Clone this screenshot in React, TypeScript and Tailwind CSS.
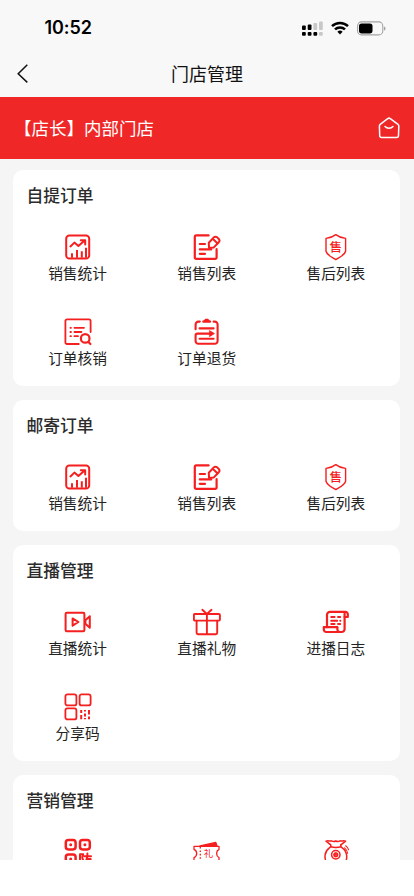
import type { ReactNode } from 'react'

const RED = '#f51f1f'

function Icon({ children, width = 1.8 }: { children: ReactNode; width?: number }) {
  return (
    <svg
      viewBox="0 0 28 28"
      className="size-7 shrink-0"
      fill="none"
      stroke={RED}
      strokeWidth={width}
      strokeLinecap="round"
      strokeLinejoin="round"
    >
      {children}
    </svg>
  )
}

const StatsIcon = () => (
  <Icon width={2}>
    <rect x="2.2" y="2.6" width="23" height="23" rx="3.2" />
    <path d="M6.4 13.4l4-3.8 4 3.4 6.2-5.4M16.8 7.2h4.4v4.4" />
    <path d="M8 20.2v4.6M13 17v7.8M17.8 18.2v6.6M22 14.8v10" strokeLinecap="butt" />
  </Icon>
)

const ListIcon = () => (
  <Icon width={2.2}>
    <path d="M15.6 2.4H3.2a1.4 1.4 0 0 0-1.4 1.4v20.6a1.4 1.4 0 0 0 1.4 1.4h19a1.4 1.4 0 0 0 1.4-1.4v-8.2" />
    <path d="M6.8 11h5.2M6.8 16.4h11.4M6.8 20.8h5.2" />
    <path d="M15.8 9.8l5-5.4a2.4 2.4 0 0 1 3.4 0l1.6 1.6a2.4 2.4 0 0 1 0 3.2l-5 5.2-4.8.6zM20 6l4.4 4.2" strokeWidth="2" />
  </Icon>
)

const ShieldIcon = () => (
  <Icon width={1.4}>
    <path d="M13.8 1.6c3 2.4 6.4 3.4 9.8 3.8v12.8c-1.2 4.4-5.8 5.8-9.8 8.4-4-2.6-8.6-4-9.8-8.4V5.4c3.400-.4 6.800-1.400 9.800-3.800z" />
    <text
      x="13.8"
      y="18.8"
      textAnchor="middle"
      fontSize="12.5"
      fontWeight="500"
      fontFamily="'Noto Sans CJK SC', sans-serif"
      fill={RED}
      stroke="none"
    >
      售
    </text>
  </Icon>
)

const VerifyIcon = () => (
  <Icon width={1.8}>
    <path d="M14.8 26H3a1.6 1.6 0 0 1-1.6-1.6V3A1.6 1.6 0 0 1 3 1.4h22A1.6 1.6 0 0 1 26.600 3v11" />
    <path d="M10.4 9.800h9.600M10.400 14h7M10.400 18.200h3.600M6.400 9.800h.6M6.400 14h.6M6.400 18.200h.6" />
    <circle cx="21.2" cy="20.4" r="4.3" strokeWidth="2.2" />
    <path d="M24.4 24l2 2" strokeWidth="2.2" />
  </Icon>
)

const ReturnIcon = () => (
  <Icon width={2.1}>
    <path d="M6.8 3.600H5.400a2.800 2.800 0 0 0-2.800 2.800v4.800M20.600 3.600h1.200a2.800 2.800 0 0 1 2.800 2.800v16.600a2.800 2.800 0 0 1-2.800 2.800H5.400a2.800 2.800 0 0 1-2.800-2.800v-5.600a1.800 1.800 0 0 1 1.800-1.800h14.600" />
    <path d="M10.200 3.600h7M6.600 10.400h14M6.600 20.800h14" />
    <path d="M10.600 4v-1.400l1.800-1.800h2.600l1.800 1.800V4z" fill={RED} stroke="none" />
    <path d="M16.800 12.800l4.600 2.800-4.600 2.800z" fill={RED} strokeWidth="0.8" />
  </Icon>
)

const VideoIcon = () => (
  <Icon width={2}>
    <rect x="1.6" y="4.8" width="18.8" height="18.4" rx="1.2" />
    <path d="M8.6 10.400l5.800 3.600-5.800 3.600z" />
    <path d="M21.400 12.200l4.400-4v11.600l-4.400-4z" />
  </Icon>
)

const GiftIcon = () => (
  <Icon width={1.9}>
    <rect x="0.900" y="6" width="26" height="6.600" rx="1" />
    <path d="M3.600 12.800v12a1.400 1.400 0 0 0 1.400 1.400h17.800a1.400 1.400 0 0 0 1.400-1.400v-12M13.900 6v20M9.300 1.800L13.900 6l4.600-4.200" />
  </Icon>
)

const LogIcon = () => (
  <Icon width={2.200}>
    <path d="M22.600 9h3.200V6.200A2.400 2.400 0 0 0 23.400 3.800H8a3 3 0 0 0-3 3v12.400" />
    <path d="M22.600 5.400v15.200a3 3 0 0 1-3 3.400H4.200a2.400 2.400 0 0 1-2.400-2.400v-2.400h13.600v2.400a2.400 2.400 0 0 0 2.400 2.400" />
    <path d="M9.200 9h3.400M16 9h2.200M9.200 12.700h6M18.200 12.700h.2M9.200 16h3.400M16 16h2.200" strokeWidth="1.900" />
  </Icon>
)

const ShareCodeIcon = () => (
  <Icon width={1.8}>
    <rect x="1.400" y="1.400" width="11" height="11" rx="2" />
    <rect x="15.600" y="1.400" width="11" height="11" rx="2" />
    <rect x="1.400" y="15.400" width="11" height="11" rx="2" />
    <path
      d="M17.200 17v3M17.200 22v4.200M21 17v1.400M21 20.600v3M21 25v1.200M25 17v4.600M25 23.400v2.800"
      strokeLinecap="butt"
      strokeWidth="2"
    />
  </Icon>
)

const AntiCodeIcon = () => (
  <Icon width={2.500}>
    <rect x="1.800" y="2" width="9.800" height="9.400" rx="2.600" />
    <rect x="16" y="2" width="9.800" height="9.400" rx="2.600" />
    <rect x="1.800" y="16.400" width="9.800" height="9.400" rx="2.600" />
    <path d="M6.700 6.700h.01M20.900 6.700h.01M6.700 21h.01" strokeWidth="3" />
    <path d="M16 27V16.200h3.200l-1 3.200 1 3M20.600 18.200h6.400M23.400 15.400v2.800M23.400 18.200l-1.600 6M23.200 21h3.400v4" strokeWidth="2" />
  </Icon>
)

const TicketIcon = () => (
  <Icon width={1.300}>
    <path d="M7 8L22.800 4.400 24 8z" fill={RED} />
    <path d="M1 8.400h25v3c-3.200 1.600-3.200 6.600 0 8.200V24H1v-4.400c3.600-1.600 3.600-6.600 0-8.200z" />
    <path d="M7.300 9v15" strokeDasharray="1.600 1.800" strokeLinecap="butt" />
    <text
      x="15.600"
      y="19.200"
      textAnchor="middle"
      fontSize="9.500"
      fontFamily="'Noto Sans CJK SC', sans-serif"
      fill={RED}
      stroke="none"
    >
      礼
    </text>
  </Icon>
)

const MoneyBagIcon = () => (
  <Icon width={1.500}>
    <path d="M8.400 6.600L4 3.200c2-1 4 .4 5.600-.4 1.600.9 3 .9 4.200.2 1.400.7 2.800.7 4.200-.2 1.600.8 3.600-.6 5.600.4l-4.400 3.400" />
    <path d="M8.400 6.600c1 1.200.4 2.200-1 3.200C2.400 13.400 1.800 20 5 25.600h17.600c3.400-5.200 2.800-12.200-2.400-15.800-1.400-1-2-2-1-3.200M8.600 8.800c3.600.8 7 .8 10.400 0" />
    <circle cx="13.800" cy="16.800" r="4.200" />
    <circle cx="13.800" cy="16.800" r="1.800" />
    <path d="M13.800 15v3.600M12 16.800h3.600M22.600 9.800c1.600 1.400 2.800 3.200 3 5.400M23.600 7.800c1.600 1 2.600 2.400 3 4" strokeWidth="1.100" />
  </Icon>
)

type Entry = { label: string; icon: () => ReactNode }

const sections: { title: string; items: Entry[] }[] = [
  {
    title: '自提订单',
    items: [
      { label: '销售统计', icon: StatsIcon },
      { label: '销售列表', icon: ListIcon },
      { label: '售后列表', icon: ShieldIcon },
      { label: '订单核销', icon: VerifyIcon },
      { label: '订单退货', icon: ReturnIcon },
    ],
  },
  {
    title: '邮寄订单',
    items: [
      { label: '销售统计', icon: StatsIcon },
      { label: '销售列表', icon: ListIcon },
      { label: '售后列表', icon: ShieldIcon },
    ],
  },
  {
    title: '直播管理',
    items: [
      { label: '直播统计', icon: VideoIcon },
      { label: '直播礼物', icon: GiftIcon },
      { label: '进播日志', icon: LogIcon },
      { label: '分享码', icon: ShareCodeIcon },
    ],
  },
  {
    title: '营销管理',
    items: [
      { label: '', icon: AntiCodeIcon },
      { label: '', icon: TicketIcon },
      { label: '', icon: MoneyBagIcon },
    ],
  },
]

function StatusBar() {
  return (
    <div className="flex h-[51px] items-center justify-between pt-[5px] pr-7 pl-[44.5px]">
      <span className="font-['Inter'] text-[18px] leading-none font-semibold tracking-[-0.1px] text-black">10:52</span>
      <div className="flex items-center gap-2">
        {/* dual sim signal */}
        <svg viewBox="0 0 21 15" className="h-[15px] w-[21px]">
          <rect x="0" y="4.5" width="3.8" height="4.5" rx="1" />
          <rect x="5.7" y="3.5" width="3.8" height="5.5" rx="1" />
          <rect x="11.4" y="2" width="3.8" height="7" rx="1" fill="#c8c8c8" />
          <rect x="17" y="0.5" width="3.8" height="8.5" rx="1" fill="#c8c8c8" />
          <rect x="0" y="11" width="3.8" height="3.8" rx="1" />
          <rect x="5.7" y="11" width="3.8" height="3.8" rx="1" />
          <rect x="11.4" y="11" width="3.8" height="3.8" rx="1" />
          <rect x="17" y="11" width="3.8" height="3.8" rx="1" fill="#c8c8c8" />
        </svg>
        <svg viewBox="0 0 18 14" className="h-[14px] w-[18px]" fill="none" stroke="#000" strokeWidth="2.5">
          <path d="M1 5.2a11.4 11.4 0 0 1 16 0M4 8.4a7.2 7.2 0 0 1 10 0" />
          <path d="M9 13.4l-2.6-2.7a3.7 3.7 0 0 1 5.2 0z" fill="#000" stroke="none" />
        </svg>
        <svg viewBox="0 0 29 15" className="h-[15px] w-[29px]">
          <rect x="0.6" y="0.9" width="25.2" height="13" rx="4" fill="none" stroke="#a3a3a3" strokeWidth="1.1" />
          <rect x="2" y="2.4" width="13.5" height="10" rx="2.6" />
          <path d="M27 5.4c2 .6 2 3.4 0 4z" fill="#a3a3a3" />
        </svg>
      </div>
    </div>
  )
}

function Section({ title, items }: { title: string; items: Entry[] }) {
  return (
    <section className="rounded-[10px] bg-white">
      <h2 className="flex h-[51px] items-center pt-px pl-[13.5px] text-[16.8px] font-medium text-[#2b2b2b]">{title}</h2>
      <div className="grid grid-cols-3 gap-y-[5px]">
        {items.map(({ label, icon: Glyph }, i) => (
          <div key={i} className="flex h-20 flex-col items-center pt-3">
            <Glyph />
            <span className="text-[14.7px] leading-6 text-[#222]">{label}</span>
          </div>
        ))}
      </div>
    </section>
  )
}

export default function App() {
  return (
    <div className="h-[896px] w-[414px] overflow-hidden bg-white font-['Noto_Sans_CJK_SC',sans-serif]">
      <div className="flex h-[859.5px] flex-col overflow-hidden bg-[#f5f5f5]">
        <header className="h-[97px] shrink-0 bg-[#f8f8f8]">
          <StatusBar />
          <div className="grid h-11 grid-cols-3 items-center">
            <svg viewBox="0 0 12 20" className="ml-[17px] h-5 w-3" fill="none" stroke="#111" strokeWidth="1.5">
              <path d="M10.3 1.7L1.2 10.7l9.100 8.700" />
            </svg>
            <h1 className="text-center text-[18px] leading-none text-[#111]">门店管理</h1>
          </div>
        </header>

        <div className="flex h-[61.5px] shrink-0 items-center justify-between bg-[#f02727] pr-[14px] pl-[14px]">
          <span className="text-[17.5px] text-white">【店长】内部门店</span>
          <svg viewBox="0 0 22 22" className="size-[22px]" fill="none" stroke="#fff" strokeWidth="1.5" strokeLinecap="round" strokeLinejoin="round">
            <path d="M9.7 1.7L2.2 7.4a2 2 0 0 0-.8 1.6l.3 9.600a2 2 0 0 0 2 2h14.800a2 2 0 0 0 2-2l.3-9.600a2 2 0 0 0-.8-1.600l-7.700-5.700a2 2 0 0 0-2.600 0z" />
            <path d="M7 9.6c2 2.2 6 2.2 8 0" />
          </svg>
        </div>

        <main className="flex flex-col gap-[14px] pt-[11px] pr-[13.6px] pl-[13px]">
          {sections.map((s) => (
            <Section key={s.title} {...s} />
          ))}
        </main>
      </div>
    </div>
  )
}
